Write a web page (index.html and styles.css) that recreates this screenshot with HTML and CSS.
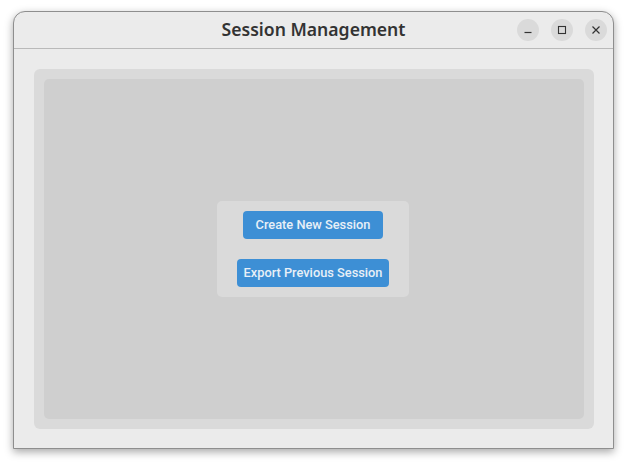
FILE: index.html
```html
<!DOCTYPE html>
<html>
<head>
<meta charset="utf-8">
<link rel="stylesheet" href="styles.css">
</head>
<body>
<div class="window">
  <div class="titlebar">
    <div class="title">Session Management</div>
    <div class="controls">
      <div class="ctl"><svg width="10" height="10" viewBox="0 0 10 10"><path d="M1.5 7.5h7" stroke="#333" stroke-width="1.2"/></svg></div>
      <div class="ctl"><svg width="10" height="10" viewBox="0 0 10 10"><rect x="1.5" y="1.5" width="7" height="7" fill="none" stroke="#333" stroke-width="1.1"/></svg></div>
      <div class="ctl"><svg width="10" height="10" viewBox="0 0 10 10"><path d="M1.5 1.5l7 7M8.5 1.5l-7 7" stroke="#333" stroke-width="1.2"/></svg></div>
    </div>
  </div>
  <div class="content">
    <div class="outer">
      <div class="inner">
        <div class="box">
          <button class="btn btn-create">Create New Session</button>
          <button class="btn btn-export">Export Previous Session</button>
        </div>
      </div>
    </div>
  </div>
</div>
</body>
</html>
```
FILE: styles.css
```css
html, body { margin: 0; padding: 0; background: #ffffff; }
body { padding: 11px 0 0 13px; height: 466px; box-sizing: border-box; }
.window {
  width: 601px;
  height: 438px;
  box-sizing: border-box;
  border: 1px solid #8e8e8e;
  border-radius: 12px 12px 0 0;
  background: #ebebeb;
  box-shadow: 0 3px 8px rgba(0,0,0,0.35);
}
.titlebar {
  height: 37px;
  box-sizing: border-box;
  border-bottom: 1px solid #b9b9b9;
  position: relative;
  display: flex;
  align-items: center;
  justify-content: center;
}
.title {
  font-family: "Noto Sans", sans-serif;
  font-weight: 600;
  font-size: 17.6px;
  color: #333333;
  margin-top: -3px;
}
.controls {
  position: absolute;
  right: 6px;
  top: 7px;
  display: flex;
  gap: 12px;
}
.ctl {
  width: 22px;
  height: 22px;
  border-radius: 50%;
  background: #dadada;
  display: flex;
  align-items: center;
  justify-content: center;
}
.content {
  padding: 20px 19px 19px 20px;
}
.outer {
  height: 360px;
  box-sizing: border-box;
  background: #dadada;
  border-radius: 6px;
  padding: 10px;
}
.inner {
  height: 100%;
  background: #cfcfcf;
  border-radius: 5px;
  display: flex;
  align-items: center;
  justify-content: center;
}
.box {
  width: 192px;
  height: 96px;
  box-sizing: border-box;
  background: #dadada;
  border-radius: 5px;
  display: flex;
  flex-direction: column;
  align-items: center;
  padding-top: 10px;
  gap: 20px;
  margin-left: -2px;
}
.btn {
  height: 28px;
  border: none;
  border-radius: 4px;
  background: #3d8fd5;
  color: #e8eff7;
  font-family: Roboto, sans-serif;
  font-weight: 500;
  font-size: 12.8px;
  padding: 0 0 2px 0;
}
.btn-create { width: 140px; }
.btn-export { width: 152px; }
```
